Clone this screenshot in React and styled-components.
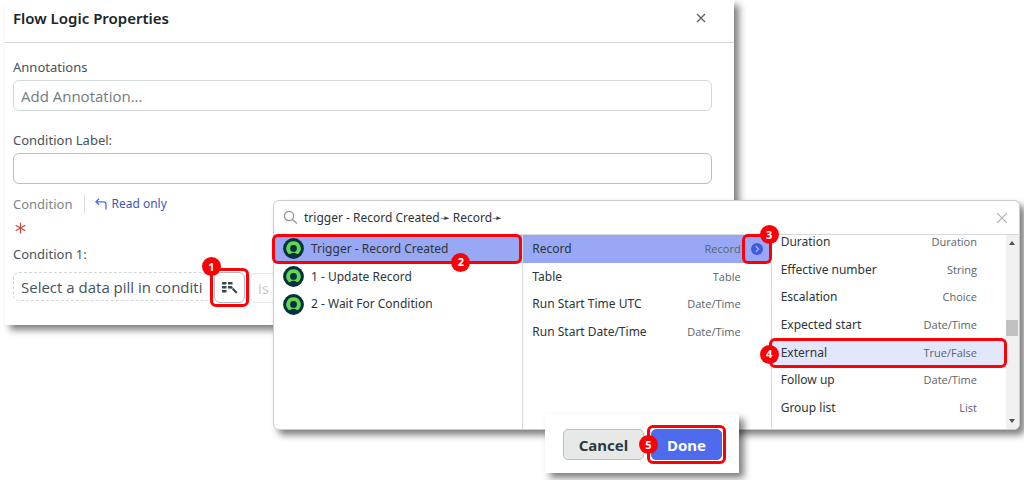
import React from "react";
import styled, { createGlobalStyle, css } from "styled-components";

const Global = createGlobalStyle`
  * { box-sizing: border-box; }
  body {
    margin: 0;
    background: #fff;
    color: #2b3538;
    font-family: "Noto Sans", "Open Sans", sans-serif;
    font-size: 13px;
    line-height: 20px;
  }
  button, input, select { font: inherit; color: inherit; margin: 0; }
  h1, ul { margin: 0; padding: 0; }
`;

const shadow = "5px 5px 7px rgba(0, 0, 0, 0.5)";
const red = "#fb0007";
const fieldFont = css`
  font-family: "Open Sans", "Noto Sans", sans-serif;
  font-size: 15px;
`;

const Stage = styled.main`
  position: relative;
  min-height: 100vh;
  padding: 0 4px 0 5px;
  overflow: hidden;
`;

const Panel = styled.section`
  width: 71.8%;
  background: #fff;
  box-shadow: ${shadow};
`;

const PanelHeader = styled.header`
  display: flex;
  align-items: center;
  justify-content: space-between;
  height: 43px;
  padding: 0 28px 7px 8px;
  border-bottom: 1px solid #d3d6d7;
`;

const Title = styled.h1`
  font-size: 15px;
  font-weight: 600;
  line-height: 18px;
  color: #1b2528;
`;

const IconButton = styled.button`
  display: flex;
  padding: 0;
  border: 0;
  background: none;
  color: ${(p) => p.$color};
`;

const Form = styled.form`
  padding: 14px 22px 22px 8px;
`;

const Field = styled.div`
  display: flex;
  flex-direction: column;
  gap: 3px;
  margin-bottom: ${(p) => p.$space}px;
`;

const Label = styled.label`
  color: #47535a;
  line-height: 20px;
`;

const TextInput = styled.input`
  width: 100%;
  height: 31px;
  padding: 0 7px;
  border: 1px solid ${(p) => p.$border};
  border-radius: 6px;
  background: #fff;
  ${fieldFont}
  &::placeholder { color: #757b7e; opacity: 1; }
`;

const ConditionHead = styled.div`
  display: flex;
  align-items: center;
  height: 20px;
  gap: 12px;
`;

const Muted = styled.span`
  color: #7b878a;
`;

const ReadOnly = styled.a`
  display: flex;
  align-items: center;
  gap: 4px;
  padding-left: 10px;
  border-left: 1px solid #dadddd;
  color: #4357b5;
  font-size: 12px;
  text-decoration: none;
`;

const Required = styled.div`
  display: flex;
  align-items: center;
  height: 30px;
  padding: 0 0 3px 2px;
`;

const ConditionRow = styled.div`
  display: flex;
  align-items: center;
  gap: 4px;
  margin-top: 8px;
`;

const PillGroup = styled.div`
  display: flex;
`;

const PillInput = styled.input`
  width: 201px;
  height: 29px;
  padding: 0 2px 0 7px;
  border: 1px dashed #d2d6d7;
  border-right: 0;
  border-radius: 6px 0 0 6px;
  background: #fff;
  color: #47535a;
  ${fieldFont}
`;

const Marked = styled.div`
  position: relative;
  display: flex;
`;

const PickerButton = styled.button`
  display: flex;
  align-items: center;
  justify-content: center;
  width: 31px;
  height: 31px;
  padding: 0;
  border: 1px solid #b3babd;
  border-radius: 6px;
  background: #fff;
`;

const Operator = styled.select`
  appearance: none;
  width: 150px;
  height: 30px;
  padding: 0 8px;
  border: 1px solid #e6e8e8;
  border-radius: 6px;
  background: #fff;
  color: #c6cacb;
  opacity: 1;
  ${fieldFont}
`;

const Outline = styled.span`
  position: absolute;
  inset: ${(p) => p.$inset};
  border: 3px solid ${red};
  border-radius: 6px;
  pointer-events: none;
  z-index: 1;
`;

const badgePlaces = {
  topLeft: css`top: -15px; left: -12px;`,
  bottom: css`bottom: -9px; right: 52px;`,
  topRight: css`top: -10px; right: -8px;`,
  middleLeft: css`top: 6px; left: -12px;`,
};

const Badge = styled.span`
  position: absolute;
  ${(p) => badgePlaces[p.$place]}
  z-index: 2;
  display: flex;
  align-items: center;
  justify-content: center;
  width: 19px;
  height: 19px;
  border-radius: 50%;
  background: ${red};
  color: #fff;
  font-size: 11px;
  font-weight: 700;
  line-height: 16px;
`;

const Picker = styled.section`
  position: absolute;
  top: 200px;
  left: 273px;
  right: 4px;
  border: 1px solid #c9cdce;
  border-radius: 6px;
  background: #fff;
  box-shadow: ${shadow};
  font-size: 12px;
`;

const SearchBar = styled.div`
  display: flex;
  align-items: center;
  gap: 6px;
  height: 34px;
  padding: 0 11px 0 9px;
  border-bottom: 1px solid #d6dada;
  color: #8a9294;
`;

const SearchInput = styled.input`
  flex: 1;
  min-width: 0;
  padding: 0;
  border: 0;
  outline: 0;
  background: none;
  color: #2b3538;
`;

const Columns = styled.div`
  display: grid;
  grid-template-columns: repeat(3, minmax(0, 1fr));
  height: 194px;
`;

const List = styled.ul`
  display: grid;
  grid-template-rows: repeat(7, 1fr);
  height: 194px;
  list-style: none;
  & + & { border-left: 1px solid #d6dada; }
`;

const ScrollColumn = styled.div`
  display: flex;
  border-left: 1px solid #d6dada;
`;

const ScrolledList = styled(List)`
  flex: 1;
  margin-top: -7px;
`;

const Item = styled.li`
  position: relative;
  display: flex;
  align-items: center;
  gap: 7px;
  padding: 0 ${(p) => p.$end || 0}px 0 9px;
  background: ${(p) => p.$fill || "transparent"};
`;

const ItemName = styled.span`
  flex: 1;
  white-space: nowrap;
`;

const ItemType = styled.span`
  color: #59646a;
  font-size: 11px;
  font-family: "Open Sans", "Noto Sans", sans-serif;
  white-space: nowrap;
`;

const Expand = styled.div`
  position: absolute;
  top: 0;
  right: 0;
  bottom: 0;
  width: 28px;
  display: flex;
  align-items: center;
  justify-content: center;
`;

const ScrollBar = styled.div`
  display: flex;
  flex-direction: column;
  align-items: center;
  justify-content: space-between;
  width: 13px;
  padding: 6px 0;
  background: #f0f0f0;
  border-bottom-right-radius: 6px;
`;

const Thumb = styled.div`
  width: 12px;
  height: 16px;
  margin-bottom: 8px;
  background: #c1c1c1;
`;

const Footer = styled.footer`
  position: absolute;
  top: 414px;
  left: 545px;
  display: flex;
  align-items: center;
  gap: 7px;
  padding: 15px 17px 13px 18px;
  background: #fff;
  box-shadow: ${shadow};
`;

const Button = styled.button`
  width: ${(p) => (p.$primary ? 71 : 81)}px;
  height: 31px;
  padding: 0;
  border: 1px solid ${(p) => (p.$primary ? "#4f6bed" : "#b9c0c3")};
  border-radius: 5px;
  background: ${(p) => (p.$primary ? "#4f6bed" : "#e7e9e8")};
  color: ${(p) => (p.$primary ? "#fff" : "#2b3b40")};
  font-size: 15px;
  font-weight: 700;
`;

const Cross = ({ size, width }) => (
  <svg width={size} height={size} viewBox="0 0 10 10" fill="none" stroke="currentColor" strokeWidth={width} aria-hidden="true">
    <path d="M1 1L9 9M9 1L1 9" />
  </svg>
);

const Agent = () => (
  <svg width="21" height="21" viewBox="0 0 21 21" aria-hidden="true">
    <circle cx="10.5" cy="10.5" r="10.4" fill="#05303f" />
    <path d="M10.5 3.2a7.2 7.2 0 0 0-5.2 12.2c.6.7 1.400.9 2.200.4a5.700 5.700 0 0 1 6 0c.8.5 1.600.3 2.200-.4A7.200 7.200 0 0 0 10.500 3.200Z" fill="#62d84e" />
    <circle cx="10.5" cy="10.4" r="3.4" fill="#05303f" />
  </svg>
);

const steps = ["Trigger - Record Created", "1 - Update Record", "2 - Wait For Condition"];

const outputs = [
  ["Record", "Record"],
  ["Table", "Table"],
  ["Run Start Time UTC", "Date/Time"],
  ["Run Start Date/Time", "Date/Time"],
];

const fields = [
  ["Duration", "Duration"],
  ["Effective number", "String"],
  ["Escalation", "Choice"],
  ["Expected start", "Date/Time"],
  ["External", "True/False"],
  ["Follow up", "Date/Time"],
  ["Group list", "List"],
];

export default function App() {
  return (
    <Stage>
      <Global />
      <Panel>
        <PanelHeader>
          <Title>Flow Logic Properties</Title>
          <IconButton type="button" aria-label="Close panel" $color="#566166">
            <Cross size={10} width={1.3} />
          </IconButton>
        </PanelHeader>
        <Form>
          <Field $space={19}>
            <Label htmlFor="annotations">Annotations</Label>
            <TextInput id="annotations" placeholder="Add Annotation..." $border="#d3d8d9" />
          </Field>
          <Field $space={10}>
            <Label htmlFor="condition-label">Condition Label:</Label>
            <TextInput id="condition-label" $border="#b9c0c2" />
          </Field>
          <ConditionHead>
            <Muted>Condition</Muted>
            <ReadOnly href="#read-only">
              <svg width="12" height="12" viewBox="0 0 12 12" fill="none" stroke="#4f6bed" strokeWidth="1.3" aria-hidden="true">
                <path d="M4 .8L1 3.8L4 6.8M1 3.8H8.5Q11 3.8 11 6.3V11.5" />
              </svg>
              Read only
            </ReadOnly>
          </ConditionHead>
          <Required>
            <svg width="11" height="12" viewBox="0 0 11 12" stroke="#d0453e" strokeWidth="1.2" aria-label="Required">
              <path d="M5.5 .5V11.5M.7 3.2L10.3 8.8M10.3 3.2L.7 8.8" />
            </svg>
          </Required>
          <Label htmlFor="pill">Condition 1:</Label>
          <ConditionRow>
            <PillGroup>
              <PillInput id="pill" readOnly value="Select a data pill in conditi" />
              <Marked>
                <PickerButton type="button" aria-label="Open data pill picker">
                  <svg width="16" height="14" viewBox="0 0 16 14" fill="#3a484d" aria-hidden="true">
                    <path d="M0 1h4.5v2.4H0zM6 1h4.5v2.4H6zM0 5h4.5v2.4H0zM0 9h4.5v2.4H0z" />
                    <path d="M6 5H9.5L11 6.2L9.3 8L8.3 7.4H6Z" />
                    <path d="M9.8 8.2L11.3 6.7L15.5 11.2L14 12.8Z" />
                  </svg>
                </PickerButton>
                <Outline $inset="-4px" />
                <Badge $place="topLeft">1</Badge>
              </Marked>
            </PillGroup>
            <Operator aria-label="Operator" defaultValue="is">
              <option value="is">is</option>
            </Operator>
          </ConditionRow>
        </Form>
      </Panel>

      <Picker aria-label="Data pill picker">
        <SearchBar>
          <svg width="15" height="15" viewBox="0 0 15 15" fill="none" stroke="currentColor" strokeWidth="1.2" aria-hidden="true">
            <circle cx="6" cy="6" r="4.6" />
            <path d="M9.5 9.5L14 13.5" />
          </svg>
          <SearchInput aria-label="Search data pills" defaultValue="trigger - Record Created➛ Record➛" />
          <IconButton type="button" aria-label="Close picker" $color="#a9adae">
            <Cross size={12} width={0.9} />
          </IconButton>
        </SearchBar>
        <Columns>
          <List>
            {steps.map((name, i) => (
              <Item key={name} $fill={i === 0 && "#98a8f5"}>
                <Agent />
                <ItemName>{name}</ItemName>
                {i === 0 && (
                  <>
                    <Outline $inset="-1px 0 -1px -2px" />
                    <Badge $place="bottom">2</Badge>
                  </>
                )}
              </Item>
            ))}
          </List>
          <List>
            {outputs.map(([name, type], i) => (
              <Item key={name} $fill={i === 0 && "#98a8f5"} $end={30}>
                <ItemName>{name}</ItemName>
                <ItemType>{type}</ItemType>
                {i === 0 && (
                  <Expand>
                    <IconButton type="button" aria-label="Expand Record">
                      <svg width="12" height="12" viewBox="0 0 12 12" fill="none" aria-hidden="true">
                        <circle cx="6" cy="6" r="6" fill="#3f5be3" />
                        <path d="M4.8 3.2L7.6 6L4.8 8.8" stroke="#aebbf8" strokeWidth="1.2" />
                      </svg>
                    </IconButton>
                    <Outline $inset="-1px" />
                    <Badge $place="topRight">3</Badge>
                  </Expand>
                )}
              </Item>
            ))}
          </List>
          <ScrollColumn>
            <ScrolledList>
              {fields.map(([name, type]) => (
                <Item key={name} $fill={name === "External" && "#e3e7fd"} $end={29}>
                  <ItemName>{name}</ItemName>
                  <ItemType>{type}</ItemType>
                  {name === "External" && (
                    <>
                      <Outline $inset="-1px -1px -1px -3px" />
                      <Badge $place="middleLeft">4</Badge>
                    </>
                  )}
                </Item>
              ))}
            </ScrolledList>
            <ScrollBar>
              <svg width="6" height="4" viewBox="0 0 6 4" fill="#4b4f50" aria-hidden="true"><path d="M0 4L3 0L6 4Z" /></svg>
              <Thumb />
              <svg width="6" height="4" viewBox="0 0 6 4" fill="#4b4f50" aria-hidden="true"><path d="M0 0L3 4L6 0Z" /></svg>
            </ScrollBar>
          </ScrollColumn>
        </Columns>
      </Picker>

      <Footer>
        <Button type="button">Cancel</Button>
        <Marked>
          <Button type="button" $primary>Done</Button>
          <Outline $inset="-4px" />
          <Badge $place="middleLeft">5</Badge>
        </Marked>
      </Footer>
    </Stage>
  );
}
